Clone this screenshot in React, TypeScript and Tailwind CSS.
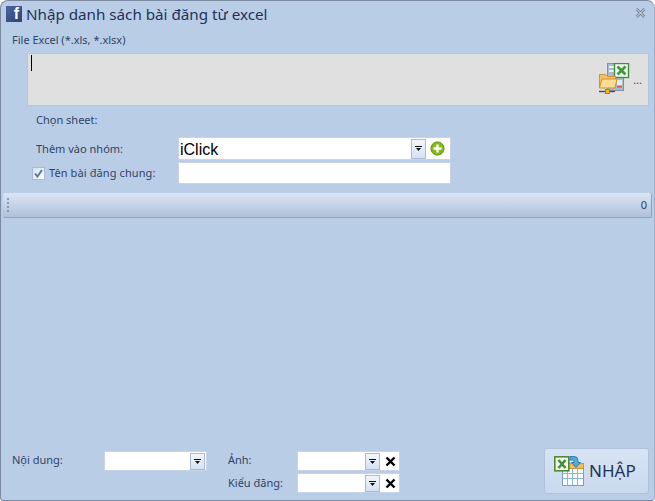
import React from 'react'

const labelClass = 'text-[11px] leading-[14px] text-[#2f4468]'

function DropButton({ tall }: { tall?: boolean }) {
  return (
    <span
      className={`flex w-[15px] items-center justify-center border border-[#a9bad4] bg-gradient-to-b from-[#f2f6fc] to-[#d5e2f3] ${
        tall ? 'h-[20px]' : 'h-[17px]'
      }`}
    >
      <svg width="7" height="5" viewBox="0 0 7 5">
        <rect x="0" y="0" width="7" height="1" fill="#111" />
        <path d="M1 2h5L3.5 5z" fill="#111" />
      </svg>
    </span>
  )
}

function Combo({ clear }: { clear?: boolean }) {
  return (
    <div className="flex h-[20px] w-[103px] items-center border border-[#c6d3e8] bg-white pr-[1px]">
      {clear ? (
        <>
          <span className="ml-auto">
            <DropButton />
          </span>
          <svg width="11" height="11" viewBox="0 0 11 11" className="ml-[5px] mr-[2px]">
            <path d="M1.5 1.5l8 8M9.5 1.5l-8 8" stroke="#000" strokeWidth="2.4" />
          </svg>
        </>
      ) : (
        <span className="ml-auto">
          <DropButton />
        </span>
      )}
    </div>
  )
}

function FbIcon() {
  return (
    <span className="flex h-[16px] w-[16px] items-end justify-end bg-gradient-to-br from-[#4a66a0] to-[#2c4373] pr-[3px] font-['Liberation_Sans',sans-serif] text-[16px] font-bold leading-[16px] text-white">
      f
    </span>
  )
}

function ExcelFolderIcon() {
  return (
    <svg width="31" height="31" viewBox="0 0 31 31">
      <rect x="8.5" y="0.5" width="16" height="27" fill="#a9bccf" stroke="#7f93a8" />
      <rect x="10" y="3" width="5" height="2" fill="#eef3f8" />
      <rect x="10" y="7" width="5" height="2" fill="#eef3f8" />
      <rect x="18" y="17" width="5" height="5" fill="#e4ecf2" />
      <rect x="18" y="23" width="5" height="1.5" fill="#d9534f" />
      <rect x="15.5" y="0.5" width="14" height="14" fill="#f4f8f2" stroke="#3f8f3a" strokeWidth="1.4" />
      <path d="M18.5 3.5l8 8M26.5 3.5l-8 8" stroke="#3f9a3c" strokeWidth="2.6" />
      <path d="M0.5 11.5h6l2 2h8v11h-16z" fill="#f0c269" stroke="#cc9330" />
      <path d="M3 16h15l-2 9H0.5z" fill="#fbdc92" stroke="#cc9330" />
      <path d="M0 28.5h16" stroke="#4a4a4a" strokeWidth="1.4" />
      <rect x="6.5" y="26.5" width="4" height="4" fill="#f4b820" stroke="#b27a10" />
    </svg>
  )
}

function ExcelTableIcon() {
  return (
    <svg width="30" height="30" viewBox="0 0 30 30">
      <rect x="8.5" y="7.5" width="21" height="22" fill="#f8fbfe" stroke="#7d9dbd" />
      <rect x="8.5" y="7.5" width="21" height="5" fill="#f2bd55" stroke="#cf9733" />
      <path d="M8.5 17.5h21M8.5 22.5h21M13.5 12.5v17M18.5 12.5v17M23.5 12.5v17" stroke="#8fb3d2" />
      <path d="M16 0.5h4a4 4 0 0 1 4 4v2h2.5l-4.5 5-4.5-5H20V5.5a1.5 1.5 0 0 0-1.5-1.5H16z" fill="#55a7dc" stroke="#2f7fb6" />
      <rect x="0.8" y="0.8" width="14" height="14" fill="#f3f7ef" stroke="#4d8a33" strokeWidth="1.6" />
      <path d="M4.5 4l7 8M11.5 4l-7 8" stroke="#3d9237" strokeWidth="2.6" />
    </svg>
  )
}

export default function App() {
  return (
    <div className="flex h-[501px] w-[655px] flex-col rounded-t-[8px] rounded-b-[4px] border border-[#7b8aa0] border-r-[#9fb0c8] bg-[#bacde6] font-['Noto_Sans',sans-serif]">
      <div className="flex h-[29px] items-center pl-[5px] pr-[8px]">
        <span className="mb-[3px]">
          <FbIcon />
        </span>
        <span className="mb-[3px] ml-[4px] text-[15.2px] leading-[20px] text-[#1f3358]">Nhập danh sách bài đăng từ excel</span>
        <svg width="11" height="10" viewBox="0 0 11 10" className="mb-[6px] ml-auto">
          <path d="M1.5 1l8 8M9.5 1l-8 8" stroke="#6a7a92" strokeWidth="2.6" />
          <path d="M1.5 1l8 8M9.5 1l-8 8" stroke="#f3f6fb" strokeWidth="1" />
        </svg>
      </div>

      <div className={`mt-[3px] pl-[11px] ${labelClass}`}>File Excel (*.xls, *.xlsx)</div>

      <div className="ml-[26px] mr-[5px] mt-[6px] flex h-[53px] items-center border border-[#b4c5de] bg-[#e0e0e0] pl-[3px] pr-[6px]">
        <span className="mb-[34px] h-[16px] w-[1px] bg-black" />
        <span className="mb-[2px] ml-auto">
          <ExcelFolderIcon />
        </span>
        <span className="ml-[3px] text-[11px] leading-[14px] text-[#2a4d9b]">...</span>
      </div>

      <div className={`ml-[35px] mt-[7px] ${labelClass}`}>Chọn sheet:</div>

      <div className="mt-[10px] flex items-center pl-[35px]">
        <span className={`w-[142px] ${labelClass}`}>Thêm vào nhóm:</span>
        <div className="flex h-[23px] w-[273px] items-center border border-[#c6d3e8] bg-white pl-[1px] pr-[24px] font-['Liberation_Sans',sans-serif] text-[16px] text-black">
          <span className="pt-[2px]">iClick</span>
          <span className="ml-auto">
            <DropButton tall />
          </span>
        </div>
        <svg width="15" height="15" viewBox="0 0 15 15" className="-ml-[21px]">
          <circle cx="7.5" cy="7.5" r="6.6" fill="#86b81a" stroke="#5e9a0a" />
          <path d="M7.5 3.5v8M3.5 7.5h8" stroke="#fff" strokeWidth="2.4" />
        </svg>
      </div>

      <div className="mt-[2px] flex items-center pl-[31px]">
        <span className="flex h-[13px] w-[13px] items-center justify-center border border-[#a9b9d2] bg-gradient-to-br from-[#d5dfeb] to-[#ffffff]">
          <svg width="9" height="9" viewBox="0 0 9 9">
            <path d="M1 4.5l2.4 3L8 1" fill="none" stroke="#5b7aa8" strokeWidth="2" />
          </svg>
        </span>
        <span className={`ml-[4px] w-[129px] tracking-[0.1px] ${labelClass}`}>Tên bài đăng chung:</span>
        <div className="h-[22px] w-[273px] border border-[#c6d3e8] bg-white" />
      </div>

      <div className="mx-[2px] mt-[9px] flex h-[25px] items-center justify-between rounded-[2px] border-b border-r border-[#8ea3c4] bg-gradient-to-b from-[#dbe6f5] to-[#b0c1d7] pl-[4px] pr-[4px]">
        <span className="flex flex-col gap-[2px]">
          <span className="h-[2px] w-[2px] bg-[#8899bb]" />
          <span className="h-[2px] w-[2px] bg-[#8899bb]" />
          <span className="h-[2px] w-[2px] bg-[#8899bb]" />
          <span className="h-[2px] w-[2px] bg-[#8899bb]" />
        </span>
        <span className={labelClass}>0</span>
      </div>

      <div className="flex-1" />

      <div className="mb-[6px] flex items-start pl-[11px] pr-[5px]">
        <span className={`mt-[5px] w-[92px] ${labelClass}`}>Nội dung:</span>
        <div className="mt-[3px]">
          <Combo />
        </div>
        <div className="ml-[21px] mt-[3px] flex flex-col gap-[2px]">
          <div className="flex items-center">
            <span className={`mb-[2px] w-[69px] ${labelClass}`}>Ảnh:</span>
            <Combo clear />
          </div>
          <div className="flex items-center">
            <span className={`w-[69px] ${labelClass}`}>Kiểu đăng:</span>
            <Combo clear />
          </div>
        </div>
        <div className="ml-auto flex h-[46px] w-[105px] items-center rounded-[3px] border border-[#b0c2dc] bg-gradient-to-b from-[#d8e4f4] to-[#c9d9ee] pl-[9px]">
          <ExcelTableIcon />
          <span className="ml-[5px] text-[17px] leading-[20px] text-[#1f3358]">NHẬP</span>
        </div>
      </div>
    </div>
  )
}
